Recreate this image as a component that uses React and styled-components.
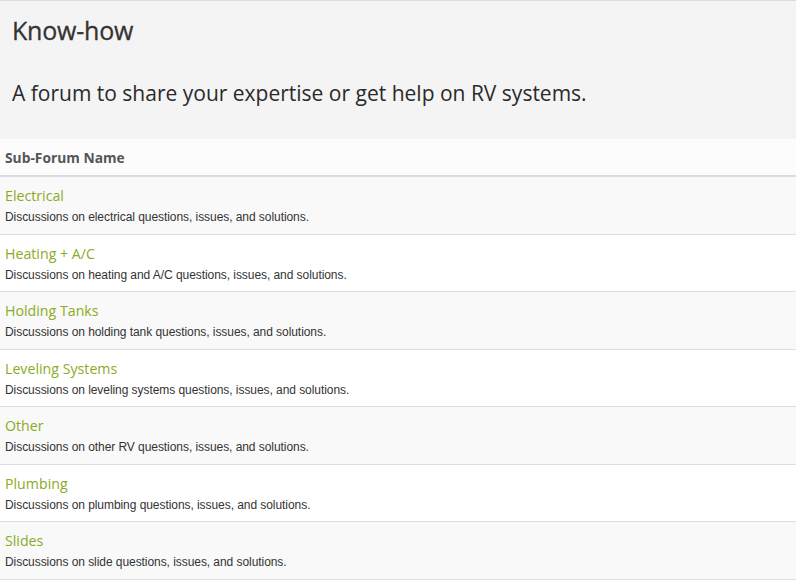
import React from "react";
import styled, { createGlobalStyle } from "styled-components";

const Global = createGlobalStyle`
  html, body { margin: 0; padding: 0; background: #fff; }
  body { font-family: "Open Sans", sans-serif; }
`;

const Page = styled.div`
  width: 796px;
  border-top: 1px solid #dcdcdc;
`;

const Hero = styled.header`
  background: #f4f4f4;
  padding: 13px 12px 30px;
  height: 138px;
  box-sizing: border-box;
`;

const Title = styled.h1`
  margin: 0;
  font-family: "Open Sans", sans-serif;
  font-weight: 400;
  font-size: 25px;
  line-height: 32px;
  color: #333;
  letter-spacing: -0.2px;
  -webkit-text-stroke: 0.3px #333;
`;

const Subtitle = styled.p`
  margin: 32px 0 0;
  font-family: "Open Sans", sans-serif;
  font-size: 21px;
  line-height: 30px;
  color: #2a2a2a;
`;

const Table = styled.div`
  display: flex;
  flex-direction: column;
`;

const HeadRow = styled.div`
  background: #fcfcfc;
  height: 36px;
  display: flex;
  align-items: center;
  padding: 0 5px;
  border-bottom: 2px solid #dcdcdc;
  font-family: "Open Sans", sans-serif;
  font-weight: 700;
  font-size: 13.8px;
  color: #555;
`;

const Row = styled.div`
  background: ${(p) => (p.$odd ? "#f9f9f9" : "#ffffff")};
  height: 57.5px;
  box-sizing: border-box;
  border-bottom: 1px solid #dddddd;
  padding: 8px 5px 0;
  display: flex;
  flex-direction: column;
`;

const Name = styled.a`
  font-family: "Open Sans", sans-serif;
  font-size: 14.2px;
  line-height: 22px;
  color: #8aab1f;
  text-decoration: none;
`;

const Desc = styled.div`
  margin-top: 1px;
  font-family: "Liberation Sans", Arial, sans-serif;
  font-size: 12px;
  letter-spacing: -0.06px;
  line-height: 18px;
  color: #333;
`;

const forums = [
  ["Electrical", "Discussions on electrical questions, issues, and solutions."],
  ["Heating + A/C", "Discussions on heating and A/C questions, issues, and solutions."],
  ["Holding Tanks", "Discussions on holding tank questions, issues, and solutions."],
  ["Leveling Systems", "Discussions on leveling systems questions, issues, and solutions."],
  ["Other", "Discussions on other RV questions, issues, and solutions."],
  ["Plumbing", "Discussions on plumbing questions, issues, and solutions."],
  ["Slides", "Discussions on slide questions, issues, and solutions."],
];

export default function App() {
  return (
    <Page>
      <Global />
      <Hero>
        <Title>Know-how</Title>
        <Subtitle>A forum to share your expertise or get help on RV systems.</Subtitle>
      </Hero>
      <Table>
        <HeadRow>Sub-Forum Name</HeadRow>
        {forums.map(([n, d], i) => (
          <Row key={n} $odd={i % 2 === 0}>
            <Name href="#">{n}</Name>
            <Desc>{d}</Desc>
          </Row>
        ))}
      </Table>
    </Page>
  );
}
